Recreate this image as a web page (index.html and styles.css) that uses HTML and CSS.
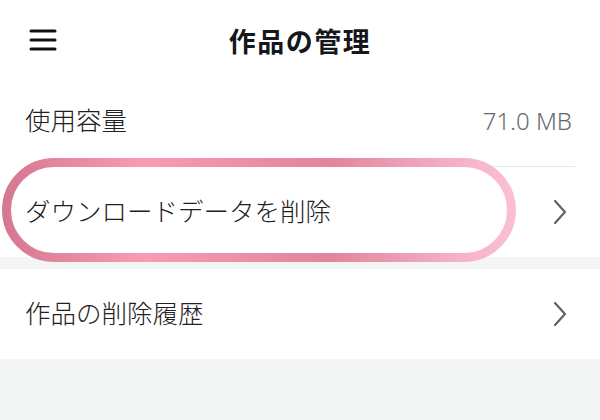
FILE: index.html
```html
<!DOCTYPE html>
<html lang="ja">
<head>
<meta charset="utf-8">
<link rel="stylesheet" href="styles.css">
</head>
<body>
<div class="page">
  <header class="header">
    <button class="menu-btn" aria-label="メニュー">
      <svg width="28" height="24" viewBox="0 0 28 24"><g stroke="#111" stroke-width="3" stroke-linecap="round"><line x1="2" y1="3" x2="26" y2="3"/><line x1="2" y1="12" x2="26" y2="12"/><line x1="2" y1="21" x2="26" y2="21"/></g></svg>
    </button>
    <h1 class="title">作品の管理</h1>
  </header>

  <section class="group">
    <div class="row row-divided">
      <span class="label">使用容量</span>
      <span class="value">71.0 MB</span>
    </div>
    <div class="row row-link highlighted">
      <span class="label">ダウンロードデータを削除</span>
      <svg class="chev" width="16" height="26" viewBox="0 0 16 26"><polyline points="3,2 13,13 3,24" fill="none" stroke="#5f6366" stroke-width="2.2" stroke-linecap="round" stroke-linejoin="round"/></svg>
      <svg class="pill" width="514" height="104" viewBox="0 0 514 104">
        <defs>
          <linearGradient id="pg" x1="0" y1="0" x2="1" y2="0">
            <stop offset="0" stop-color="#d67892"/>
            <stop offset="0.27" stop-color="#f79cb3"/>
            <stop offset="0.64" stop-color="#e2859c"/>
            <stop offset="0.9" stop-color="#f5b2c8"/>
            <stop offset="1" stop-color="#fabfd5"/>
          </linearGradient>
        </defs>
        <rect x="4.5" y="4.5" width="505" height="95" rx="47.5" ry="47.5" fill="none" stroke="url(#pg)" stroke-width="9"/>
      </svg>
    </div>
  </section>

  <section class="group">
    <div class="row row-link">
      <span class="label">作品の削除履歴</span>
      <svg class="chev" width="16" height="26" viewBox="0 0 16 26"><polyline points="3,2 13,13 3,24" fill="none" stroke="#5f6366" stroke-width="2.2" stroke-linecap="round" stroke-linejoin="round"/></svg>
    </div>
  </section>
</div>
</body>
</html>
```

FILE: styles.css
```css
* { box-sizing: border-box; }
html, body {
  margin: 0;
  padding: 0;
}
body {
  width: 600px;
  height: 420px;
  background: #f4f5f5;
  font-family: "Noto Sans", "Noto Sans CJK JP", sans-serif;
  color: #1e2022;
  overflow: hidden;
}
.page {
  display: flex;
  flex-direction: column;
  gap: 12px;
}
.header {
  height: 80px;
  background: #fff;
  display: flex;
  align-items: center;
  justify-content: center;
  position: relative;
}
.menu-btn {
  position: absolute;
  left: 29px;
  top: 28px;
  padding: 0;
  border: 0;
  background: none;
  display: flex;
}
.title {
  margin: 0;
  font-size: 27px;
  font-weight: 700;
  letter-spacing: 1.5px;
  color: #15171a;
  line-height: 1;
  margin-top: 3px;
}
.group {
  background: #fff;
  display: flex;
  flex-direction: column;
}
.header + .group {
  margin-top: -12px;
}
.row {
  height: 90px;
  padding: 0 28px 0 25px;
  display: flex;
  align-items: center;
  justify-content: space-between;
  position: relative;
}
.row-divided {
  height: 87px;
  padding-bottom: 6px;
}
.row-divided::after {
  content: "";
  position: absolute;
  left: 25px;
  right: 25px;
  bottom: 0;
  height: 1px;
  background: #e6e7e8;
}
.label {
  font-size: 25.5px;
  line-height: 1;
  font-weight: 300;
}
.value {
  font-size: 24px;
  color: #666a6e;
  line-height: 1;
  font-weight: 300;
}
.chev {
  margin-right: 4px;
}
.pill {
  position: absolute;
  left: 2px;
  top: -9px;
  pointer-events: none;
}
```
